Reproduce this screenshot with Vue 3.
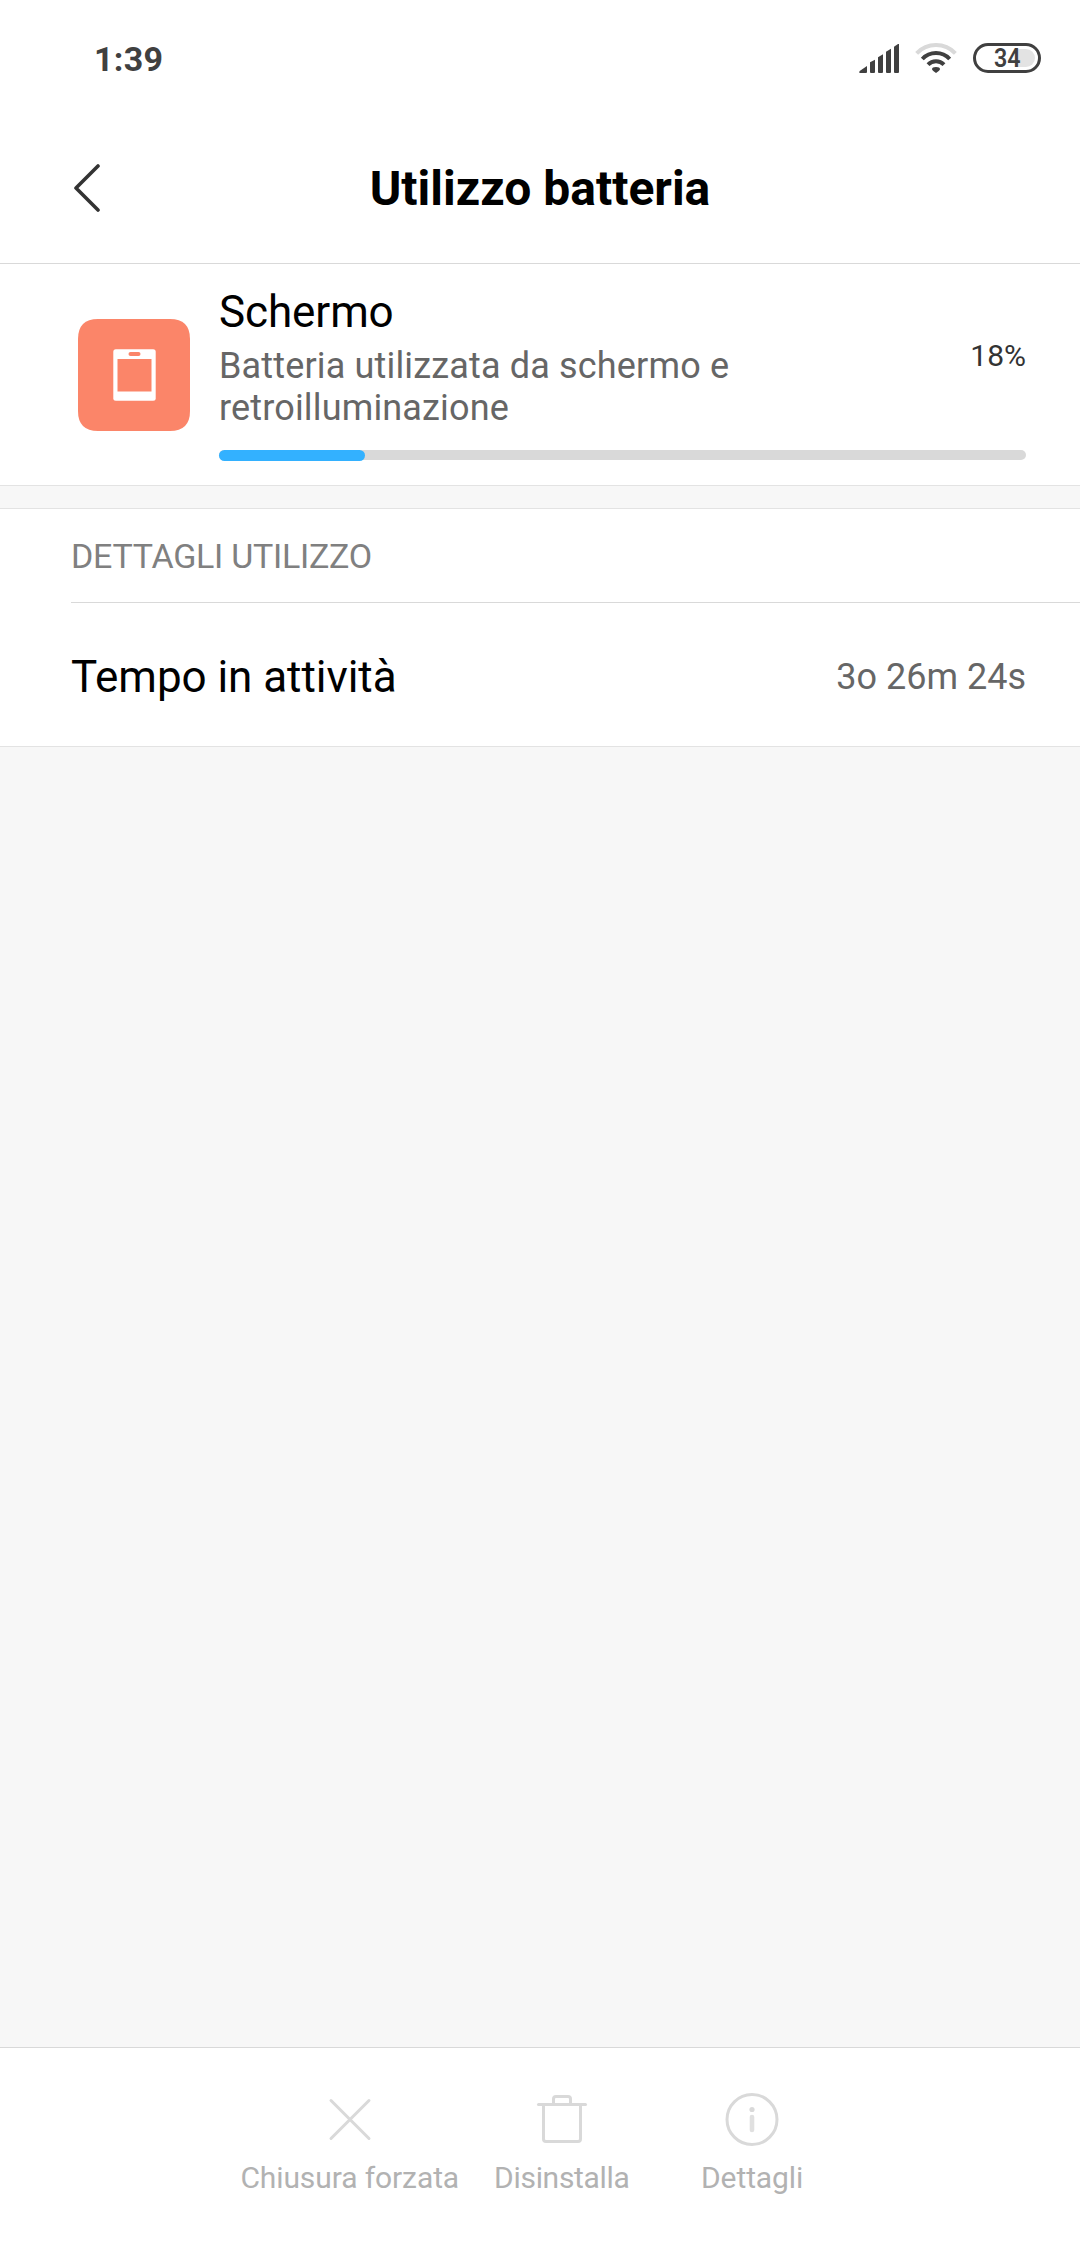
<script setup>
import { ref, computed } from 'vue'

const usage = ref({
    name: 'Schermo',
    description: 'Batteria utilizzata da schermo e retroilluminazione',
    percent: 18
})

const details = ref([
    { label: 'Tempo in attività', value: '3o 26m 24s' }
])

const actions = [
    { id: 'stop', label: 'Chiusura forzata' },
    { id: 'uninstall', label: 'Disinstalla' },
    { id: 'info', label: 'Dettagli' }
]

const barWidth = computed(() => `${usage.value.percent + 0.1}%`)
</script>

<template>
    <div class="screen">
        <div class="status-bar">
            <span class="clock">1:39</span>
            <div class="status-icons">
                <svg class="signal" viewBox="0 0 120 87">
                    <path d="M2 87 Q-1 84 3 80 L24 66 V84 Q24 87 21 87 Z" />
                    <path d="M33 55 L48 47 V84 Q48 87 45 87 H36 Q33 87 33 84 Z" />
                    <path d="M57 40 L72 31 V84 Q72 87 69 87 H60 Q57 87 57 84 Z" />
                    <path d="M81 23 L96 14 V84 Q96 87 93 87 H84 Q81 87 81 84 Z" />
                    <path d="M105 8 L117 0 H120 V84 Q120 87 117 87 H108 Q105 87 105 84 Z" />
                </svg>
                <svg class="wifi" viewBox="0 0 126 90">
                    <path class="weak" d="M5 31 A80 80 0 0 1 121 31" />
                    <path d="M22 48 A56 56 0 0 1 104 48" />
                    <path d="M39 65 A34 34 0 0 1 87 65" />
                    <path class="dot" d="M51 79 Q51 72 63 72 Q75 72 75 79 Q75 82 63 90 Q51 82 51 79 Z" />
                </svg>
                <div class="battery">
                    <span class="battery-level"></span>
                    <span class="battery-text">34</span>
                </div>
            </div>
        </div>

        <header class="header">
            <svg class="back" viewBox="0 0 26 48">
                <path d="M24 2 L2 24 L24 46" />
            </svg>
            <h1>Utilizzo batteria</h1>
        </header>

        <section class="usage">
            <svg class="app-icon" viewBox="0 0 112 112">
                <path class="tile" d="M20 0 H92 Q112 0 112 20 V92 Q112 112 92 112 H20 Q0 112 0 92 V20 Q0 0 20 0 Z" />
                <rect class="device" x="35.3" y="30.3" width="42.4" height="51.4" rx="2.5" />
                <rect class="tile" x="39.5" y="40" width="34" height="32.5" />
                <rect class="tile" x="50.5" y="33" width="12" height="4" rx="2" />
            </svg>
            <div class="usage-body">
                <div class="usage-row">
                    <div class="usage-text">
                        <h2>{{ usage.name }}</h2>
                        <p>{{ usage.description }}</p>
                    </div>
                    <span class="percent">{{ usage.percent }}%</span>
                </div>
                <div class="bar">
                    <div class="bar-fill" :style="{ width: barWidth }"></div>
                </div>
            </div>
        </section>

        <section class="details">
            <h3>DETTAGLI UTILIZZO</h3>
            <div v-for="item in details" :key="item.label" class="detail-row">
                <span class="detail-label">{{ item.label }}</span>
                <span class="detail-value">{{ item.value }}</span>
            </div>
        </section>

        <footer class="actions">
            <div v-for="action in actions" :key="action.id" class="action" :class="action.id">
                <svg class="action-icon" viewBox="0 0 60 60">
                    <path v-if="action.id === 'stop'" d="M11 11.5 L49 49.5 M49 11.5 L11 49.5" />
                    <template v-else-if="action.id === 'uninstall'">
                        <path d="M6.5 15.5 H53.5" />
                        <path d="M11.5 15.5 V50 Q11.5 52.5 14 52.5 H46 Q48.5 52.5 48.5 50 V15.5" />
                        <path d="M21.5 15.5 V10 Q21.5 7.5 24 7.5 H36 Q38.5 7.5 38.5 10 V15.5" />
                    </template>
                    <template v-else>
                        <circle cx="30" cy="30.5" r="25" />
                        <circle class="fill" cx="30" cy="20.5" r="2.6" />
                        <path class="stem" d="M30 28 V41" />
                    </template>
                </svg>
                <span>{{ action.label }}</span>
            </div>
        </footer>
    </div>
</template>

<style>
body {
    margin: 0;
    background-color: #f7f7f7;
}
</style>

<style scoped>
.screen {
    display: flex;
    flex-direction: column;
    width: 1080px;
    height: 2248px;
    background-color: #f7f7f7;
    font-family: Roboto, sans-serif;
    color: #000;
    overflow: hidden;
}

h1,
h2,
h3,
p {
    margin: 0;
    font-weight: 400;
}

.status-bar {
    display: flex;
    align-items: center;
    justify-content: space-between;
    box-sizing: border-box;
    height: 112px;
    padding: 4px 39px 0 94px;
    background-color: #fff;
}

.clock {
    padding-top: 1px;
    font-size: 34px;
    font-weight: 700;
    letter-spacing: 0.3px;
    color: #404040;
}

.status-icons {
    display: flex;
    align-items: center;
    gap: 16px;
}

.signal {
    width: 40px;
    height: 29px;
    fill: #404040;
}

.wifi {
    width: 42px;
    height: 30px;
    fill: none;
    stroke: #404040;
    stroke-width: 12;
}

.wifi .weak {
    stroke: #d9d9d9;
}

.wifi .dot {
    fill: #404040;
    stroke: none;
}

.battery {
    position: relative;
    display: flex;
    align-items: center;
    justify-content: center;
    box-sizing: border-box;
    width: 68px;
    height: 30px;
    border: 3px solid #404040;
    border-radius: 15px;
}

.battery-level {
    position: absolute;
    top: 3px;
    right: 3px;
    width: 17px;
    height: 18px;
    border-radius: 0 9px 9px 0;
    background-color: #e3e3e3;
}

.battery-text {
    position: relative;
    font-size: 25px;
    line-height: 25px;
    font-weight: 600;
    color: #404040;
    transform: scaleX(0.93);
}

.header {
    display: grid;
    grid-template-columns: 26px 1fr 26px;
    align-items: center;
    height: 151px;
    padding: 0 74px;
    border-bottom: 1px solid #d9d9d9;
    background-color: #fff;
}

.back {
    width: 26px;
    height: 48px;
    fill: none;
    stroke: #333;
    stroke-width: 3.6;
    stroke-linecap: round;
    stroke-linejoin: round;
}

h1 {
    padding-top: 2px;
    font-size: 48px;
    font-weight: 700;
    text-align: center;
}

.usage {
    display: flex;
    align-items: flex-start;
    height: 221px;
    padding: 0 54px 0 78px;
    border-bottom: 1px solid #e3e3e3;
    background-color: #fff;
}

.app-icon {
    flex: none;
    width: 112px;
    height: 112px;
    margin: 55px 29px 0 0;
}

.tile {
    fill: #fb8569;
}

.device {
    fill: #fff;
}

.usage-body {
    flex: 1;
    padding-top: 22px;
}

.usage-row {
    display: flex;
    align-items: center;
    justify-content: space-between;
}

.usage-text {
    width: 600px;
}

h2 {
    font-size: 44px;
    line-height: 52px;
    letter-spacing: -0.1px;
}

.usage-text p {
    margin-top: 7px;
    font-size: 36px;
    line-height: 42px;
    letter-spacing: 0.16px;
    color: #666;
}

.percent {
    margin-top: -4px;
    font-size: 30px;
    color: #333;
}

.bar {
    height: 10px;
    margin-top: 21px;
    border-radius: 5px;
    background-color: #d9d9d9;
}

.bar-fill {
    height: 11px;
    border-radius: 6px;
    background-color: #33b1ff;
}

.details {
    margin-top: 22px;
    border-top: 1px solid #e3e3e3;
    border-bottom: 1px solid #e3e3e3;
    background-color: #fff;
}

h3 {
    height: 93px;
    margin-left: 71px;
    border-bottom: 1px solid #d9d9d9;
    font-size: 34px;
    line-height: 95px;
    letter-spacing: -0.27px;
    color: #808080;
}

.detail-row {
    display: flex;
    align-items: center;
    justify-content: space-between;
    box-sizing: border-box;
    height: 143px;
    padding: 5px 54px 0 71px;
}

.detail-label {
    font-size: 44px;
    letter-spacing: -0.05px;
}

.detail-value {
    font-size: 36px;
    color: #666;
}

.actions {
    display: flex;
    justify-content: center;
    gap: 35px;
    box-sizing: border-box;
    height: 201px;
    margin-top: auto;
    padding-top: 41px;
    border-top: 1px solid #d9d9d9;
    background-color: #fff;
}

.action {
    display: flex;
    flex-direction: column;
    align-items: center;
    font-size: 30px;
    line-height: 36px;
    letter-spacing: -0.1px;
    color: #b2b2b2;
}

.action.uninstall {
    letter-spacing: -0.3px;
}

.action.info {
    min-width: 175px;
    letter-spacing: -0.1px;
}

.action-icon {
    width: 60px;
    height: 60px;
    margin-bottom: 11px;
    fill: none;
    stroke: #d9d9d9;
    stroke-width: 3;
    stroke-linecap: round;
}

.action-icon .fill {
    fill: #d9d9d9;
    stroke: none;
}

.action-icon .stem {
    stroke: #e0e0e0;
    stroke-width: 4.6;
}
</style>
